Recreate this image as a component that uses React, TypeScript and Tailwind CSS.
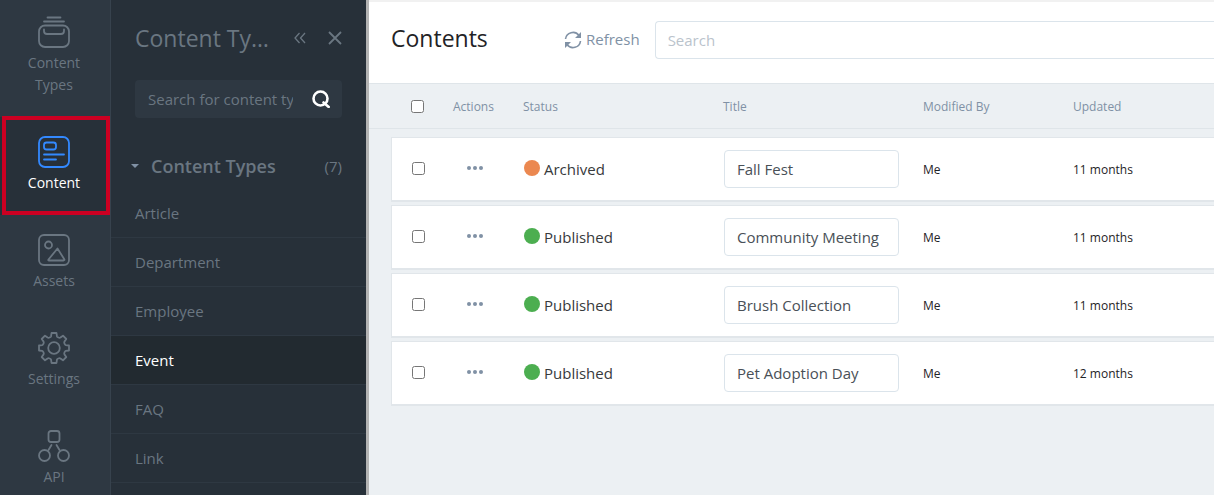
import type { ReactNode } from "react";

type NavItem = { label: string; icon: ReactNode; active?: boolean };

const navItems: NavItem[] = [
  {
    label: "Content Types",
    icon: (
      <>
        <path d="M9.5 1.5h13M6 5.5h20" />
        <rect x="1" y="9.5" width="30" height="21.5" rx="6" />
        <path d="M6 13.5v1.5a3 3 0 0 0 3 3h14a3 3 0 0 0 3-3v-1.5" />
      </>
    ),
  },
  {
    label: "Content",
    active: true,
    icon: (
      <>
        <rect x="1" y="1" width="30" height="30" rx="6" />
        <rect x="6" y="6.5" width="12" height="7" rx="2.5" />
        <path d="M6 18.5h20M6 23.5h12" />
      </>
    ),
  },
  {
    label: "Assets",
    icon: (
      <>
        <rect x="1" y="1" width="30" height="30" rx="5" />
        <circle cx="10.5" cy="11" r="3.5" />
        <path d="M19.5 14.5 10.500 25.500c-.5.6-.2 1 .5 1h14.500c.8 0 1.200-.6.8-1.200z" />
      </>
    ),
  },
  {
    label: "Settings",
    icon: (
      <>
        <circle cx="16" cy="16" r="5.8" />
        <path d="M13.500 1h5l.4 3.200c.2 1 2.500 2 3.500 1.400L25 3.700 28.300 7l-1.900 2.600c-.6 1 .4 3.200 1.400 3.500l3.200.4v5l-3.200.4c-1 .3-2 2.500-1.400 3.500l1.900 2.600-3.300 3.300-2.600-1.900c-1-.6-3.300.4-3.500 1.400l-.4 3.200h-5l-.4-3.200c-.2-1-2.500-2-3.500-1.400L7 28.300 3.700 25l1.900-2.600c.6-1-.4-3.200-1.400-3.500L1 18.500v-5l3.200-.4c1-.3 2-2.500 1.400-3.500L3.700 7 7 3.700l2.600 1.900c1 .6 3.300-.4 3.500-1.400z" />
      </>
    ),
  },
  {
    label: "API",
    icon: (
      <>
        <rect x="10.5" y="1" width="11" height="11" rx="2.5" />
        <circle cx="6.5" cy="25.5" r="5.5" />
        <circle cx="25.5" cy="25.5" r="5.5" />
        <path d="M13.5 15l-3 5M18.5 15l3 5" />
      </>
    ),
  },
];

const schemas = ["Article", "Department", "Employee", "Event", "FAQ", "Link"];

const contents = [
  { status: "Archived", title: "Fall Fest", by: "Me", updated: "11 months" },
  { status: "Published", title: "Community Meeting", by: "Me", updated: "11 months" },
  { status: "Published", title: "Brush Collection", by: "Me", updated: "11 months" },
  { status: "Published", title: "Pet Adoption Day", by: "Me", updated: "12 months" },
];

function NavBar() {
  return (
    <nav className="w-[111px] shrink-0 border-r border-[#37424d] bg-[#2e3842]">
      {navItems.map((item) => (
        <a
          key={item.label}
          href="#"
          className={`relative flex flex-col items-center gap-1 pt-[19px] pr-[22px] pb-[21px] pl-5 text-center text-[14px] leading-[22px] first:pt-4 ${
            item.active ? "bg-[#273039] text-white" : "text-[#6a7681]"
          }`}
        >
          <svg
            viewBox="0 0 32 32"
            className={`size-8 ${item.active ? "text-[#3389ff]" : ""}`}
            fill="none"
            stroke="currentColor"
            strokeWidth="1.8"
            strokeLinecap="round"
            strokeLinejoin="round"
          >
            {item.icon}
          </svg>
          {item.label}
          {item.active && (
            <span className="absolute -top-px right-0 bottom-0 left-0.5 border-4 border-[#cc0022]" />
          )}
        </a>
      ))}
    </nav>
  );
}

function SchemaPanel() {
  return (
    <aside className="flex w-[255px] shrink-0 flex-col bg-[#273039] text-[15px] text-[#6a7681]">
      <div className="flex items-center px-6 pt-[22px]">
        <h2 className="w-[138px] truncate text-[23px] leading-8">Content Types</h2>
        <button type="button" aria-label="Collapse" className="ml-[25px]">
          <svg viewBox="0 0 12 12" className="size-3" fill="none" stroke="currentColor" strokeWidth="1.3">
            <path d="M5.5 1 1 6l4.500 5M11 1 6.500 6l4.500 5" />
          </svg>
        </button>
        <button type="button" aria-label="Close" className="ml-[22px]">
          <svg viewBox="0 0 14 14" className="size-[14px]" fill="none" stroke="currentColor" strokeWidth="1.8">
            <path d="M1 1l12 12M13 1 1 13" />
          </svg>
        </button>
      </div>

      <div className="mx-6 mt-[26px] flex h-[38px] items-center rounded bg-[#2e3842] pr-3 pl-[13px]">
        <input
          type="text"
          aria-label="Search for content type"
          placeholder="Search for content type"
          className="w-[145px] bg-transparent outline-none placeholder:text-[#6a7681]"
        />
        <button type="button" aria-label="Search" className="ml-auto text-white">
          <svg viewBox="0 0 18 18" className="size-[18px]" fill="none" stroke="currentColor" strokeWidth="2.6">
            <circle cx="8.5" cy="8.5" r="7" />
            <path d="M11.5 12.5l5.200 4.500" strokeLinecap="round" />
          </svg>
        </button>
      </div>

      <div className="mt-[34px] mb-[9px] flex h-7 items-center px-6">
        <button type="button" className="-ml-1 flex items-center gap-3 text-[18px] font-semibold">
          <span className="border-x-4 border-t-4 border-x-transparent border-t-[#8091a5]" />
          Content Types
        </button>
        <span className="ml-auto">(7)</span>
      </div>

      <ul className="flex-1">
        {schemas.map((name) => (
          <li key={name} className="border-b border-[#2e3842]">
            <a
              href="#"
              className={`flex h-12 items-center px-6 ${name === "Event" ? "bg-[#222a30] text-white" : ""}`}
            >
              {name}
            </a>
          </li>
        ))}
      </ul>
    </aside>
  );
}

function Columns() {
  return (
    <colgroup>
      <col className="w-[52px]" />
      <col className="w-[70px]" />
      <col className="w-[200px]" />
      <col className="w-[200px]" />
      <col className="w-[150px]" />
      <col />
    </colgroup>
  );
}

function ContentTable() {
  return (
    <>
      <div className="border-y border-[#dfe5e9] pl-[22px]">
        <table className="w-full table-fixed text-left text-[12px] text-[#8091a5]">
          <Columns />
          <thead>
            <tr className="h-11 [&>th]:font-normal">
              <th className="pl-5">
                <input type="checkbox" aria-label="Select all" className="block size-[13px]" />
              </th>
              <th className="pt-0.5 pl-[10px]">Actions</th>
              <th className="pt-0.5 pl-[10px]">Status</th>
              <th className="pt-0.5 pl-[10px]">Title</th>
              <th className="pt-0.5 pl-[10px]">Modified By</th>
              <th className="pt-0.5 pl-[10px]">Updated</th>
            </tr>
          </thead>
        </table>
      </div>

      <div className="pt-[5px] pl-[22px]">
        <table
          aria-label="Contents"
          className="w-full table-fixed border-separate border-spacing-x-0 border-spacing-y-[3px] text-[12px] text-[#1f2326]"
        >
          <Columns />
          <tbody>
            {contents.map((row) => (
              <tr
                key={row.title}
                className="h-[65px] [&>td]:border-t [&>td]:border-b-2 [&>td]:border-[#e1e6ea] [&>td]:bg-white"
              >
                <td className="border-l pb-0.5 pl-5">
                  <input type="checkbox" aria-label={`Select ${row.title}`} className="block size-[13px]" />
                </td>
                <td className="pb-0.5 pl-6">
                  <button type="button" aria-label="Options" className="flex gap-0.5">
                    <span className="size-1 rounded-full bg-[#8091a5]" />
                    <span className="size-1 rounded-full bg-[#8091a5]" />
                    <span className="size-1 rounded-full bg-[#8091a5]" />
                  </button>
                </td>
                <td className="pl-[11px]">
                  <div className="flex items-center gap-1 text-[15px] text-[#373a3c]">
                    <span
                      className={`mb-0.5 size-4 rounded-full ${row.status === "Archived" ? "bg-[#eb8850]" : "bg-[#4cae50]"}`}
                    />
                    {row.status}
                  </div>
                </td>
                <td className="pl-[11px]">
                  <input
                    type="text"
                    aria-label="Title"
                    defaultValue={row.title}
                    className="block h-[38px] w-[175px] rounded border border-[#dbe4eb] px-3 text-[15px] text-[#495057] outline-none"
                  />
                </td>
                <td className="pt-0.5 pl-[10px]">{row.by}</td>
                <td className="pt-0.5 pl-[10px]">{row.updated}</td>
              </tr>
            ))}
          </tbody>
        </table>
      </div>
    </>
  );
}

export default function App() {
  return (
    <div className="flex h-screen overflow-hidden font-['Open_Sans','Noto_Sans',sans-serif]">
      <NavBar />
      <SchemaPanel />
      <main className="min-w-0 flex-1 border-l-[3px] border-[#b3b3b3] bg-[#ecf0f3]">
        <header className="flex h-[83px] items-center border-t-2 border-[#f1f1f1] bg-white pb-[6px] pl-[22px]">
          <h1 className="w-[173px] pb-0.5 text-[23px] text-[#1f2326]">Contents</h1>
          <button type="button" className="flex items-center gap-1 text-[15px] text-[#8091a5]">
            <svg viewBox="0 0 18 18" className="size-[18px]" fill="none" stroke="currentColor" strokeWidth="1.6">
              <path d="M1.5 8a7.500 7.500 0 0 1 13.500-3.500M16.500 10A7.500 7.500 0 0 1 3 13.500" />
              <path d="M17 1v6h-6zM1 17v-6h6z" fill="currentColor" stroke="none" />
            </svg>
            Refresh
          </button>
          <input
            type="text"
            aria-label="Search"
            placeholder="Search"
            className="ml-[15px] h-[38px] min-w-0 flex-1 rounded-l border border-r-0 border-[#dbe4eb] px-3 text-[15px] outline-none placeholder:text-[#bac3cc]"
          />
        </header>
        <ContentTable />
      </main>
    </div>
  );
}
